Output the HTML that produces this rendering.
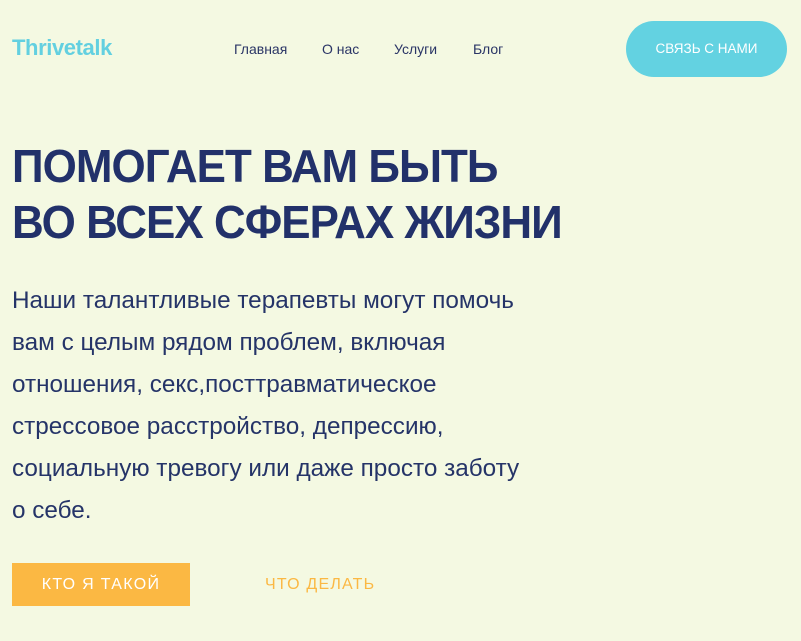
<!DOCTYPE html>
<html><head><meta charset="utf-8"><style>
html,body{margin:0;padding:0}
body{width:801px;height:641px;background:#f4f9e2;font-family:"Liberation Sans",sans-serif;color:#253468;position:relative;overflow:hidden}
.a{position:absolute;white-space:nowrap}
.logo{left:12px;top:35px;font-size:22px;font-weight:bold;color:#63d0e0;letter-spacing:-0.4px}
.nav{top:41px;font-size:14px;color:#2a3566}
.btn{left:626px;top:21px;width:161px;height:56px;border-radius:28px;background:#63d2e1;color:#fff;font-size:13.5px;line-height:56px;text-align:center}
h1{position:absolute;left:12px;top:138px;margin:0;font-size:46px;line-height:56px;font-weight:bold;letter-spacing:-1px;transform:scaleX(0.955);transform-origin:left top;white-space:nowrap;color:#22316a}
.p{left:12px;top:280px;font-size:24.3px;line-height:42px;color:#253468}
.b1{left:12px;top:563px;width:178px;height:43px;background:#fbb843;color:#fff;font-size:16px;line-height:43px;text-align:center;letter-spacing:1.3px}
.b2{left:265px;top:563px;height:43px;line-height:43px;font-size:16px;color:#fbb843;letter-spacing:1.2px}
</style></head><body>
<div class="a logo">Thrivetalk</div>
<div class="a nav" style="left:234px">Главная</div>
<div class="a nav" style="left:322px">О нас</div>
<div class="a nav" style="left:394px">Услуги</div>
<div class="a nav" style="left:473px">Блог</div>
<div class="a btn">СВЯЗЬ С НАМИ</div>
<h1>ПОМОГАЕТ ВАМ БЫТЬ<br>ВО ВСЕХ СФЕРАХ ЖИЗНИ</h1>
<div class="a p">Наши талантливые терапевты могут помочь<br>вам с целым рядом проблем, включая<br>отношения, секс,посттравматическое<br>стрессовое расстройство, депрессию,<br>социальную тревогу или даже просто заботу<br>о себе.</div>
<div class="a b1">КТО Я ТАКОЙ</div>
<div class="a b2">ЧТО ДЕЛАТЬ</div>
</body></html>
